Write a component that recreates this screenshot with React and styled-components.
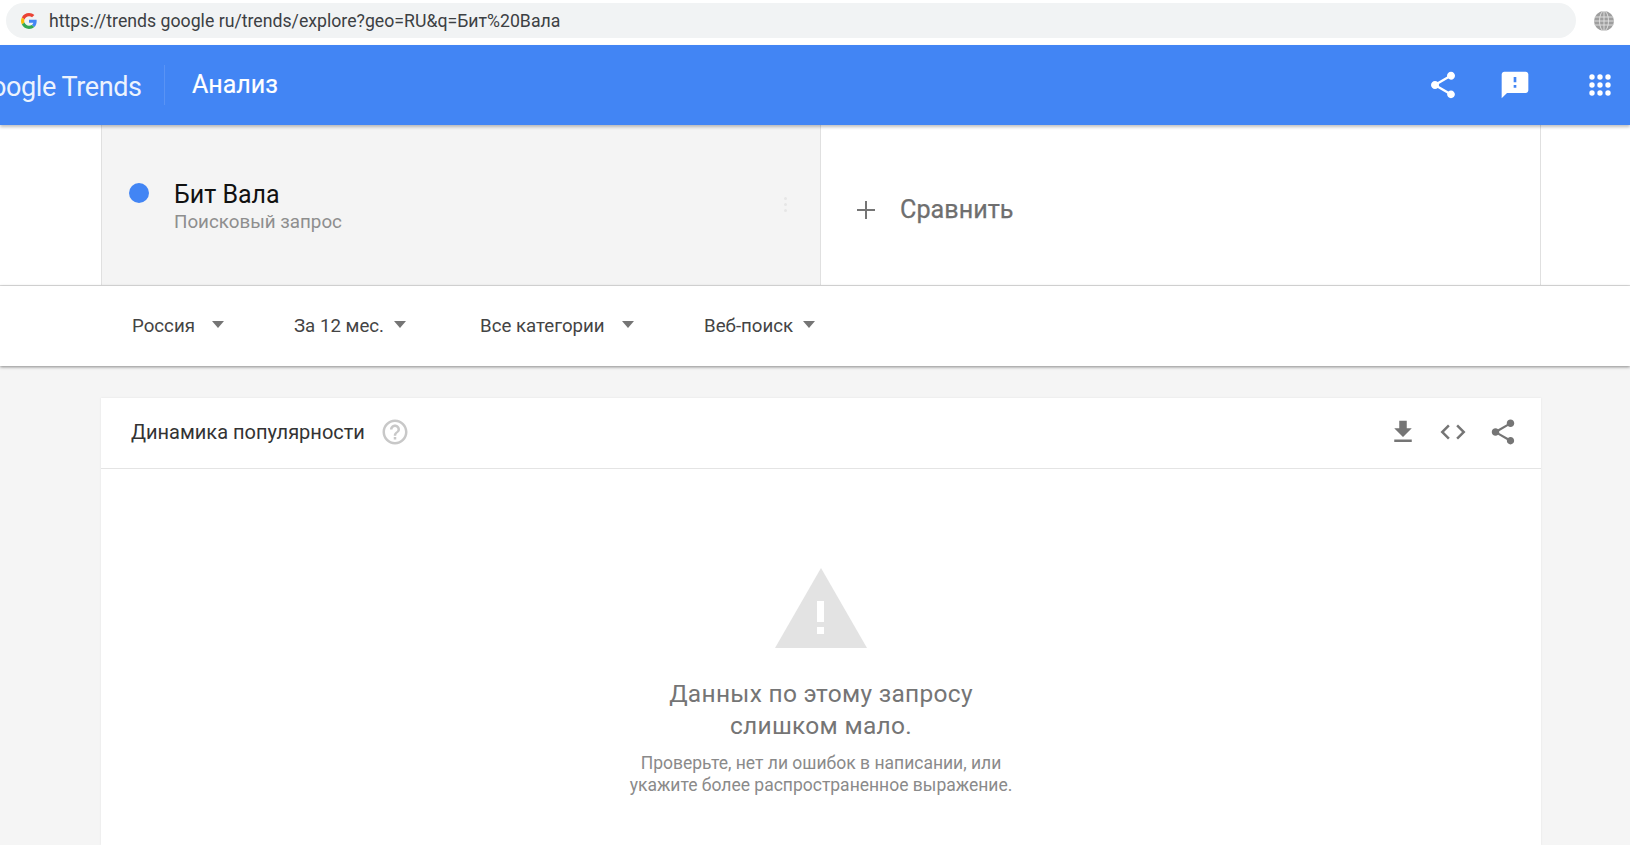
import React from 'react';
import styled, { createGlobalStyle } from 'styled-components';

const GlobalStyle = createGlobalStyle`
  html, body {
    margin: 0;
    padding: 0;
    height: 100%;
    overflow: hidden;
    background: #f5f5f5;
    font-family: Roboto, "Liberation Sans", sans-serif;
  }
`;

const Page = styled.div`
  width: 1630px;
  height: 845px;
  overflow: hidden;
  display: flex;
  flex-direction: column;
  background: #f5f5f5;
`;

const BrowserBar = styled.div`
  height: 45px;
  flex: none;
  background: #fff;
  display: flex;
  align-items: center;
  padding: 0 16px 4px 6px;
  box-sizing: border-box;
  gap: 18px;
`;
const AddressField = styled.div`
  flex: 1;
  height: 35px;
  background: #f1f3f4;
  border-radius: 18px;
  display: flex;
  align-items: center;
  padding-left: 15px;
  gap: 12px;
`;
const Url = styled.span`
  font-size: 17.7px;
  color: #3c4043;
  white-space: pre;
`;

const Header = styled.header`
  height: 80px;
  flex: none;
  background: #4285f4;
  box-shadow: 0 2px 3px rgba(0, 0, 0, 0.25);
  display: flex;
  align-items: center;
  position: relative;
  z-index: 2;
  color: #fff;
  overflow: hidden;
`;
const Logo = styled.div`
  font-size: 27px;
  letter-spacing: -0.4px;
  opacity: 0.9;
  margin-left: -27px;
  width: 191px;
  white-space: nowrap;
  padding-top: 3px;
  flex: none;
`;
const HeaderDivider = styled.div`
  width: 1px;
  height: 40px;
  background: rgba(255, 255, 255, 0.12);
  flex: none;
`;
const HeaderTitle = styled.div`
  font-size: 25px;
  -webkit-text-stroke: 0.2px #fff;
  margin-left: 27px;
  margin-bottom: 2px;
  flex: 1;
`;
const HeaderIcons = styled.div`
  display: flex;
  align-items: center;
  margin-right: 14px;
  gap: 40px;
`;
const AppsSlot = styled.div`
  display: flex;
  margin-left: 13px;
`;

const SearchRow = styled.section`
  height: 161px;
  flex: none;
  background: #fff;
  border-bottom: 1px solid #e0e0e0;
  box-sizing: border-box;
  padding: 0 89px 0 101px;
  display: flex;
`;
const TermCard = styled.div`
  width: 720px;
  flex: none;
  box-sizing: border-box;
  background: #f4f4f4;
  border-left: 1px solid #e0e0e0;
  border-right: 1px solid #e0e0e0;
  display: flex;
  align-items: flex-start;
  padding: 58px 0 0 27px;
  position: relative;
`;
const Dot = styled.div`
  width: 20px;
  height: 20px;
  border-radius: 50%;
  background: #4285f4;
  flex: none;
  margin-right: 25px;
`;
const TermText = styled.div`
  display: flex;
  flex-direction: column;
  margin-top: -3px;
`;
const TermName = styled.div`
  font-size: 25px;
  line-height: 29px;
  color: #111;
`;
const TermType = styled.div`
  font-size: 18.8px;
  line-height: 26px;
  color: #8e8e8e;
`;
const Kebab = styled.div`
  position: absolute;
  right: 33px;
  top: 72px;
  display: flex;
  flex-direction: column;
  gap: 3px;
  span {
    width: 3px;
    height: 3px;
    border-radius: 50%;
    background: #e6e6e6;
  }
`;
const CompareCell = styled.div`
  flex: 1;
  box-sizing: border-box;
  border-right: 1px solid #e0e0e0;
  display: flex;
  align-items: center;
  padding: 9px 0 0 35px;
  gap: 24px;
`;
const CompareText = styled.div`
  font-size: 25.2px;
  color: #6f6f6f;
  -webkit-text-stroke: 0.25px #6f6f6f;
`;

const FilterBar = styled.nav`
  height: 80px;
  flex: none;
  background: #fff;
  box-shadow: 0 1px 3px rgba(0, 0, 0, 0.45);
  display: flex;
  align-items: center;
  padding-left: 132px;
  position: relative;
  z-index: 1;
`;
const Filter = styled.div`
  display: flex;
  align-items: center;
  width: ${(p) => p.$w}px;
  flex: none;
  font-size: 18.7px;
  color: #444;
`;
const Caret = styled.span`
  width: 0;
  height: 0;
  border-left: 6.5px solid transparent;
  border-right: 6.5px solid transparent;
  border-top: 7px solid #757575;
  margin-left: ${(p) => p.$gap}px;
  margin-bottom: 3px;
`;

const Content = styled.main`
  flex: 1;
  padding: 32px 89px 0 101px;
  min-height: 0;
`;
const Card = styled.section`
  background: #fff;
  height: 100%;
  box-shadow: 0 0 2px rgba(0, 0, 0, 0.08);
  display: flex;
  flex-direction: column;
`;
const CardHeader = styled.div`
  height: 71px;
  flex: none;
  box-sizing: border-box;
  border-bottom: 1px solid #e4e4e4;
  display: flex;
  align-items: center;
  padding: 0 23px 2px 30px;
`;
const CardTitle = styled.div`
  font-size: 20px;
  color: #333;
`;
const HelpIcon = styled.div`
  margin-left: 15px;
  display: flex;
  flex: 1;
`;
const CardActions = styled.div`
  display: flex;
  align-items: center;
  gap: 20px;
`;
const Empty = styled.div`
  flex: 1;
  display: flex;
  flex-direction: column;
  align-items: center;
  padding-top: 99px;
`;
const EmptyTitle = styled.div`
  font-size: 24.5px;
  line-height: 32px;
  color: #757575;
  text-align: center;
  margin-top: 30px;
  letter-spacing: 0.3px;
`;
const EmptyHint = styled.div`
  font-size: 17.5px;
  line-height: 22px;
  color: #8a8a8a;
  text-align: center;
  margin-top: 10px;
`;

const GoogleG = () => (
  <svg width="16" height="16" viewBox="0 0 48 48">
    <path fill="#EA4335" d="M24 9.5c3.5 0 6.7 1.2 9.2 3.6l6.9-6.9C35.9 2.4 30.5 0 24 0 14.6 0 6.5 5.4 2.6 13.2l8 6.2C12.5 13.7 17.8 9.5 24 9.5z" />
    <path fill="#4285F4" d="M47 24.5c0-1.6-.1-3.1-.4-4.5H24v9h13c-.6 3-2.2 5.5-4.8 7.2l7.7 6C44.4 38 47 31.800 47 24.500z" />
    <path fill="#FBBC05" d="M10.500 28.600c-.5-1.400-.8-3-.8-4.600s.3-3.200.8-4.600l-8-6.200C.9 16.500 0 20.100 0 24s.9 7.500 2.600 10.800l7.900-6.200z" />
    <path fill="#34A853" d="M24 48c6.500 0 11.900-2.100 15.900-5.800l-7.700-6c-2.200 1.400-4.900 2.300-8.200 2.300-6.200 0-11.500-4.200-13.400-9.900l-8 6.200C6.500 42.600 14.600 48 24 48z" />
  </svg>
);

const Globe = () => (
  <svg width="20" height="20" viewBox="0 0 20 20" style={{ flex: 'none' }}>
    <circle cx="10" cy="10" r="10" fill="#9e9e9e" />
    <g fill="none" stroke="#e3e3e3" strokeWidth="0.9">
      <ellipse cx="10" cy="10" rx="4.5" ry="10" />
      <path d="M10 0v20M1 6h18M0 10h20M1 14h18" />
    </g>
  </svg>
);

const ShareIcon = ({ size, color }) => (
  <svg width={size} height={size} viewBox="0 0 24 24" fill={color}>
    <path d="M18 16.08c-.76 0-1.44.3-1.96.77L8.910 12.700c.05-.23.09-.46.09-.7s-.04-.47-.09-.7l7.050-4.110c.54.5 1.250.81 2.040.81 1.660 0 3-1.340 3-3s-1.340-3-3-3-3 1.340-3 3c0 .24.04.47.09.7L8.040 9.810C7.500 9.310 6.790 9 6 9c-1.660 0-3 1.340-3 3s1.340 3 3 3c.79 0 1.500-.31 2.040-.81l7.120 4.160c-.05.21-.08.43-.08.650 0 1.610 1.310 2.920 2.920 2.920s2.920-1.310 2.920-2.920-1.310-2.920-2.920-2.920z" />
  </svg>
);

const FeedbackIcon = () => (
  <svg width="32" height="32" viewBox="0 0 24 24" fill="#fff">
    <path d="M20 2H4c-1.100 0-1.990.9-1.990 2L2 22l4-4h14c1.100 0 2-.9 2-2V4c0-1.100-.9-2-2-2zm-7 12h-2v-2h2v2zm0-4h-2V6h2v4z" />
  </svg>
);

// the apps grid in the reference has round dots
const AppsIcon = () => (
  <svg width="32" height="32" viewBox="0 0 32 32" fill="#fff">
    {[8, 16, 24].map((y) =>
      [8, 16, 24].map((x) => <circle key={`${x}-${y}`} cx={x} cy={y} r="2.700" />)
    )}
  </svg>
);

const PlusIcon = () => (
  <svg width="20" height="20" viewBox="0 0 20 20" stroke="#757575" strokeWidth="2">
    <path d="M10 1v18M1 10h18" />
  </svg>
);

const QuestionIcon = () => (
  <svg width="30" height="30" viewBox="0 0 24 24" fill="#c8c8c8">
    <path d="M11 18h2v-2h-2v2zm1-16C6.480 2 2 6.480 2 12s4.480 10 10 10 10-4.480 10-10S17.520 2 12 2zm0 18c-4.410 0-8-3.590-8-8s3.590-8 8-8 8 3.590 8 8-3.590 8-8 8zm0-14c-2.210 0-4 1.790-4 4h2c0-1.100.9-2 2-2s2 .9 2 2c0 2-3 1.750-3 5h2c0-2.250 3-2.500 3-5 0-2.210-1.790-4-4-4z" />
  </svg>
);

const DownloadIcon = () => (
  <svg width="30" height="30" viewBox="0 0 24 24" fill="#757575">
    <path d="M19 9h-4V3H9v6H5l7 7 7-7zM5 18v2h14v-2H5z" />
  </svg>
);

const CodeIcon = () => (
  <svg width="30" height="30" viewBox="0 0 24 24" fill="#757575">
    <path d="M9.400 16.600L4.800 12l4.600-4.600L8 6l-6 6 6 6 1.400-1.400zm5.200 0l4.600-4.600-4.600-4.600L16 6l6 6-6 6-1.400-1.400z" />
  </svg>
);

const WarningIcon = () => (
  <svg width="92" height="80" viewBox="0 0 92 80">
    <path fill="#e3e3e3" d="M46 0L92 80H0z" />
    <path fill="#fff" d="M42 33h7v21h-7zM42 59h7v7h-7z" />
  </svg>
);

const filters = [
  { label: 'Россия', w: 162, gap: 17 },
  { label: 'За 12 мес.', w: 186, gap: 10 },
  { label: 'Все категории', w: 224, gap: 17 },
  { label: 'Веб-поиск', w: 130, gap: 10 },
];

export default function App() {
  return (
    <Page>
      <GlobalStyle />
      <BrowserBar>
        <AddressField>
          <GoogleG />
          <Url>https://trends google ru/trends/explore?geo=RU&amp;q=Бит%20Вала</Url>
        </AddressField>
        <Globe />
      </BrowserBar>

      <Header>
        <Logo>Google Trends</Logo>
        <HeaderDivider />
        <HeaderTitle>Анализ</HeaderTitle>
        <HeaderIcons>
          <ShareIcon size={32} color="#fff" />
          <FeedbackIcon />
          <AppsSlot>
            <AppsIcon />
          </AppsSlot>
        </HeaderIcons>
      </Header>

      <SearchRow>
        <TermCard>
          <Dot />
          <TermText>
            <TermName>Бит Вала</TermName>
            <TermType>Поисковый запрос</TermType>
          </TermText>
          <Kebab>
            <span />
            <span />
            <span />
          </Kebab>
        </TermCard>
        <CompareCell>
          <PlusIcon />
          <CompareText>Сравнить</CompareText>
        </CompareCell>
      </SearchRow>

      <FilterBar>
        {filters.map((f) => (
          <Filter key={f.label} $w={f.w}>
            {f.label}
            <Caret $gap={f.gap} />
          </Filter>
        ))}
      </FilterBar>

      <Content>
        <Card>
          <CardHeader>
            <CardTitle>Динамика популярности</CardTitle>
            <HelpIcon>
              <QuestionIcon />
            </HelpIcon>
            <CardActions>
              <DownloadIcon />
              <CodeIcon />
              <ShareIcon size={30} color="#757575" />
            </CardActions>
          </CardHeader>
          <Empty>
            <WarningIcon />
            <EmptyTitle>
              Данных по этому запросу
              <br />
              слишком мало.
            </EmptyTitle>
            <EmptyHint>
              Проверьте, нет ли ошибок в написании, или
              <br />
              укажите более распространенное выражение.
            </EmptyHint>
          </Empty>
        </Card>
      </Content>
    </Page>
  );
}
